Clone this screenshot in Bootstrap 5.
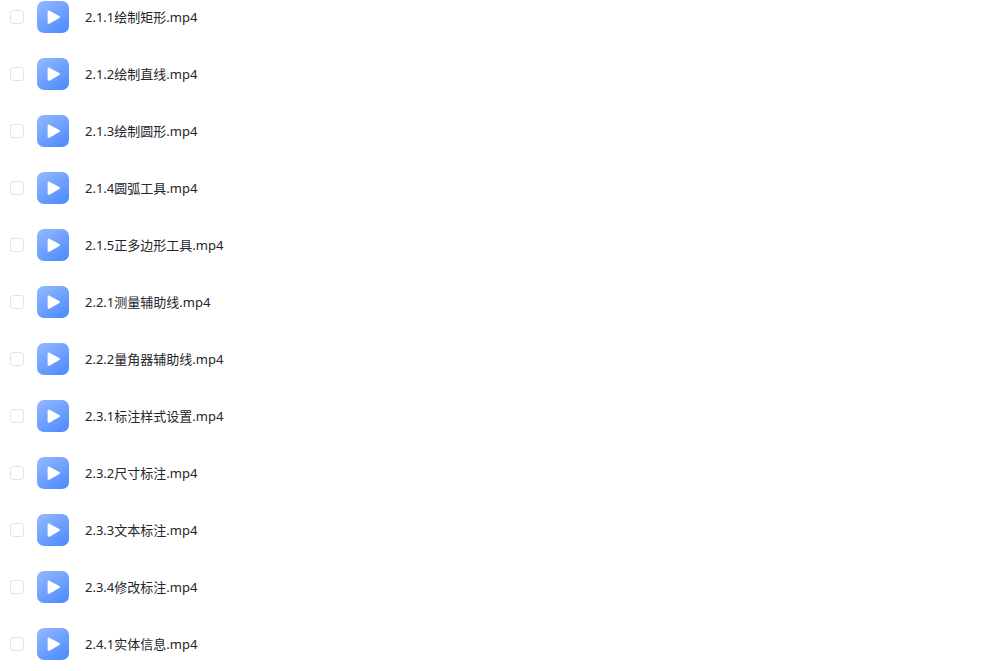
<!DOCTYPE html>
<html lang="zh-CN">
<head>
<meta charset="utf-8">
<meta name="viewport" content="width=device-width, initial-scale=1">
<title>视频文件</title>
<link href="https://cdn.jsdelivr.net/npm/bootstrap@5.3.0/dist/css/bootstrap.min.css" rel="stylesheet">
<style>
  body { font-family: "Noto Sans", "Noto Sans CJK SC", sans-serif; font-size: 13px; line-height: 20px; color: #25262b; background: #fff; }
  .file-list { padding: 1px 10px 0; gap: 25px; }
  .file-row { height: 32px; }
  .file-row .form-check-input { width: 14px; height: 14px; margin: 0 13px 0 0; border: 1px solid #e3e4e6; border-radius: 3px; flex: none; }
  .file-row .form-check-input:checked { border-color: #4a87fb; background-color: #4a87fb; }
  .file-name { gap: 16px; color: inherit; }
  .file-icon { width: 32px; height: 32px; flex: none; }
</style>
</head>
<body>
<svg width="0" height="0" class="position-absolute" aria-hidden="true">
  <defs>
    <linearGradient id="tile" x1="0.1" y1="0" x2="0.8" y2="1">
      <stop offset="0" stop-color="#92b7ff"/>
      <stop offset="1" stop-color="#4f8cff"/>
    </linearGradient>
    <symbol id="video" viewBox="0 0 32 32">
      <rect width="32" height="32" rx="7" fill="url(#tile)"/>
      <path d="M11.8 10.8 L21.7 16 L11.8 21.6 Z" fill="#fff" stroke="#fff" stroke-width="2.4" stroke-linejoin="round"/>
    </symbol>
  </defs>
</svg>
<main class="container-fluid p-0">
  <ul class="file-list list-unstyled d-flex flex-column mb-0" id="files"></ul>
</main>
<script src="https://cdn.jsdelivr.net/npm/bootstrap@5.3.0/dist/js/bootstrap.bundle.min.js"></script>
<script>
  const files = [
    "2.1.1绘制矩形.mp4", "2.1.2绘制直线.mp4", "2.1.3绘制圆形.mp4", "2.1.4圆弧工具.mp4",
    "2.1.5正多边形工具.mp4", "2.2.1测量辅助线.mp4", "2.2.2量角器辅助线.mp4", "2.3.1标注样式设置.mp4",
    "2.3.2尺寸标注.mp4", "2.3.3文本标注.mp4", "2.3.4修改标注.mp4", "2.4.1实体信息.mp4"
  ];
  document.getElementById("files").innerHTML = files.map((name, i) => `
    <li class="file-row d-flex align-items-center">
      <input class="form-check-input" type="checkbox" id="file${i}">
      <label class="file-name d-flex align-items-center" for="file${i}">
        <svg class="file-icon" aria-hidden="true"><use href="#video"/></svg>
        <span>${name}</span>
      </label>
    </li>`).join("");
</script>
</body>
</html>
